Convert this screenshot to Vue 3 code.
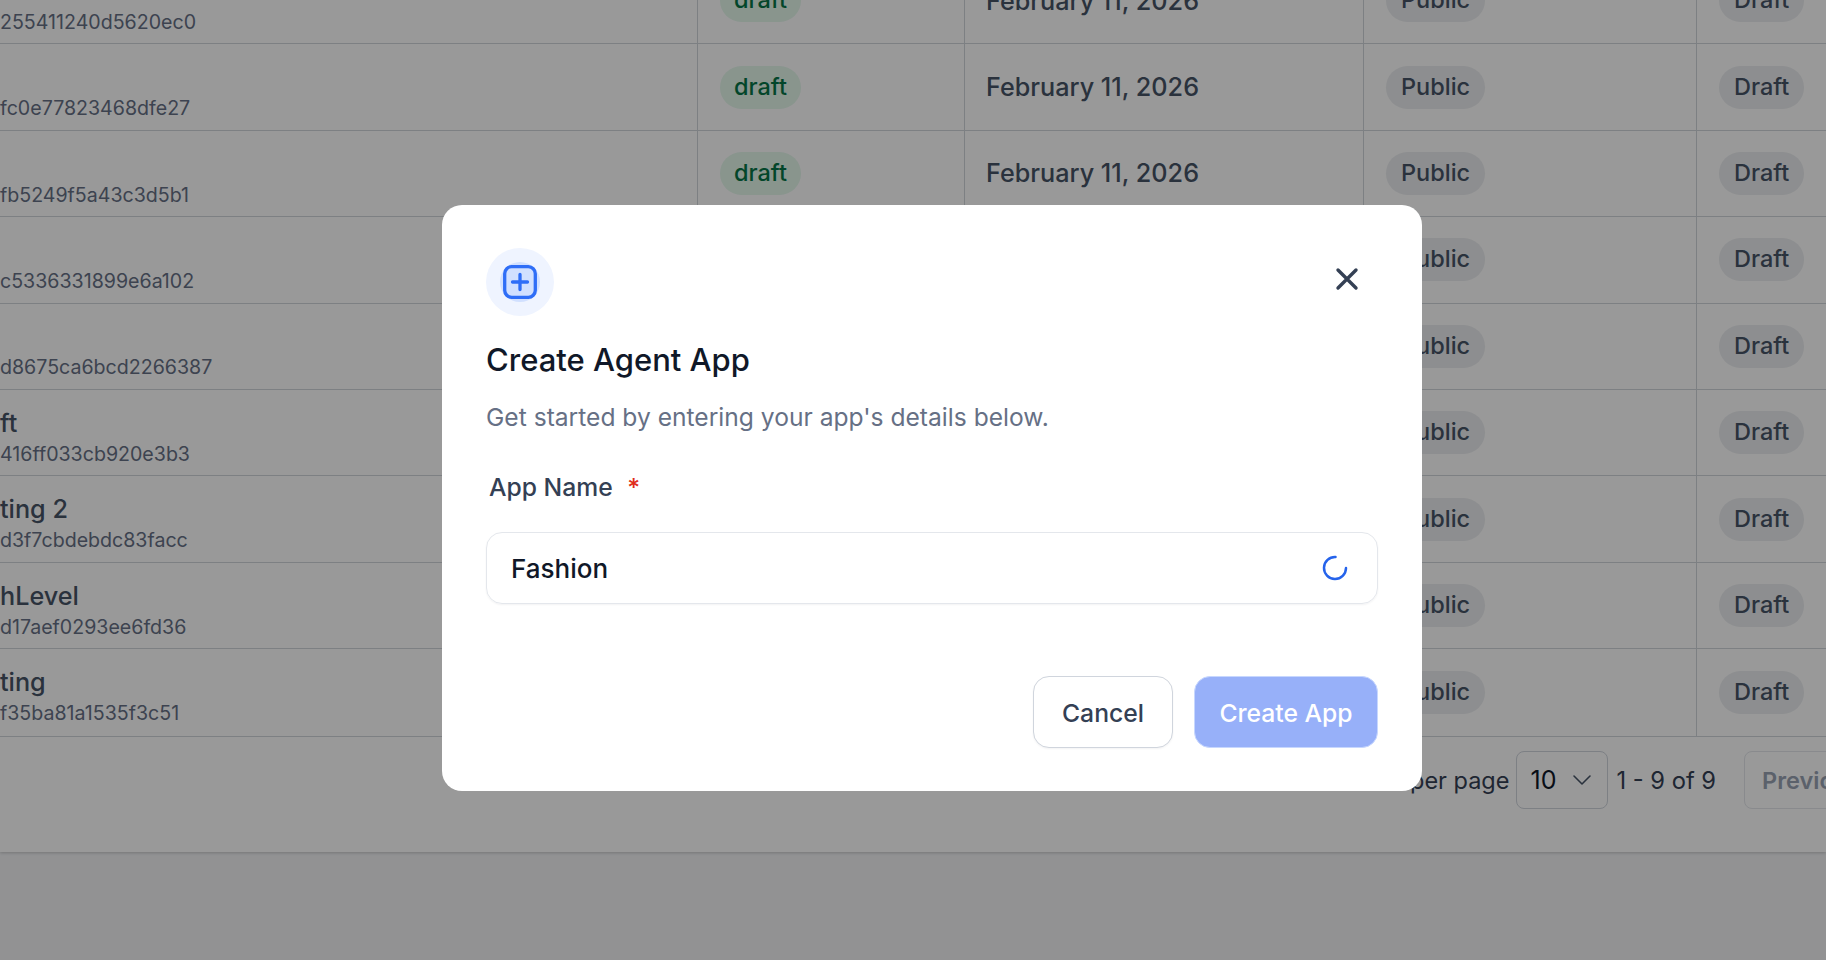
<script setup>
const rows = [
  { id: "255411240d5620ec0" },
  { id: "fc0e77823468dfe27" },
  { id: "fb5249f5a43c3d5b1" },
  { id: "c5336331899e6a102" },
  { id: "d8675ca6bcd2266387" },
  { name: "ft", id: "416ff033cb920e3b3" },
  { name: "ting 2", id: "d3f7cbdebdc83facc" },
  { name: "hLevel", id: "d17aef0293ee6fd36" },
  { name: "ting", id: "f35ba81a1535f3c51" },
];
</script>

<template>
  <div class="page">
    <div class="panel">
      <div class="table">
        <div v-for="row in rows" :key="row.id" class="row">
          <div class="cell cell-name">
            <span v-if="row.name" class="app-name">{{ row.name }}</span>
            <span class="app-id">{{ row.id }}</span>
          </div>
          <div class="cell"><span class="badge badge-green">draft</span></div>
          <div class="cell date">February 11, 2026</div>
          <div class="cell"><span class="badge">Public</span></div>
          <div class="cell"><span class="badge">Draft</span></div>
        </div>
      </div>
      <div class="pager">
        <span class="pager-text">per page</span>
        <div class="select">
          <span>10</span>
          <svg width="20" height="12" viewBox="0 0 20 12" fill="none">
            <path d="M2 2l8 8 8-8" stroke="#475467" stroke-width="1.6" stroke-linecap="round" stroke-linejoin="round" />
          </svg>
        </div>
        <span class="pager-text range">1 - 9 of 9</span>
        <button type="button" class="prev">Previous</button>
      </div>
    </div>

    <div class="overlay">
      <div class="modal">
        <button type="button" class="close" aria-label="Close">
          <svg width="24" height="24" viewBox="0 0 24 24" fill="none">
            <path d="M3 3l18 18M21 3L3 21" stroke="#344054" stroke-width="3.4" stroke-linecap="round" />
          </svg>
        </button>
        <div class="icon-ring">
          <div class="icon-inner">
            <svg width="34" height="34" viewBox="0 0 34 34" fill="none">
              <rect x="1.7" y="1.7" width="30.6" height="30.6" rx="7" stroke="#2f6ef7" stroke-width="3.3" />
              <path d="M17 9.5v15M9.5 17h15" stroke="#2f6ef7" stroke-width="3.3" stroke-linecap="round" />
            </svg>
          </div>
        </div>
        <h2 class="title">Create Agent App</h2>
        <p class="desc">Get started by entering your app's details below.</p>
        <label class="label">App Name <span class="required">*</span></label>
        <div class="input">
          <span class="input-value">Fashion</span>
          <svg width="26" height="26" viewBox="0 0 26 26" fill="none">
            <path d="M13.5 2a11 11 0 1 0 10.5 11" stroke="#2563eb" stroke-width="2.5" stroke-linecap="round" />
          </svg>
        </div>
        <div class="actions">
          <button type="button" class="btn btn-cancel">Cancel</button>
          <button type="button" class="btn btn-create">Create App</button>
        </div>
      </div>
    </div>
  </div>
</template>

<style>
html,
body {
  margin: 0;
  overflow: hidden;
}
</style>

<style scoped>
.page {
  position: relative;
  width: 1826px;
  height: 960px;
  overflow: hidden;
  background: #f3f4f6;
  font-family: Inter, "Liberation Sans", sans-serif;
}

.panel {
  width: 1826px;
  height: 894px;
  margin-top: -42px;
  background: #fff;
  box-shadow: 0 1px 3px rgba(0, 0, 0, 0.2);
}

.row {
  display: grid;
  grid-template-columns: 698px 267px 399px 333px 200px;
  height: 86.4px;
  box-sizing: border-box;
  border-bottom: 1px solid #d1d5db;
}

.row:last-child {
  height: 88px;
}

.row:last-child .cell-name {
  padding-bottom: 9.5px;
}

.cell {
  display: flex;
  align-items: center;
  padding-left: 22px;
  border-right: 1px solid #d1d5db;
  box-sizing: border-box;
}

.cell-name {
  flex-direction: column;
  align-items: flex-start;
  justify-content: flex-end;
  padding: 0 0 7.5px;
}

.app-name {
  font-size: 25.2px;
  line-height: 34px;
  font-weight: 500;
  color: #475467;
}

.app-id {
  font-size: 19.6px;
  line-height: 28px;
  color: #667085;
}

.badge {
  display: inline-flex;
  align-items: center;
  box-sizing: border-box;
  height: 43px;
  padding: 0 15px 2px;
  border-radius: 22px;
  background: #ebedf0;
  color: #475467;
  font-size: 23.5px;
  font-weight: 500;
}

.badge-green {
  padding: 0 14px 2px;
  background: #e4f8ec;
  color: #067647;
}

.date {
  padding-left: 21px;
  font-size: 25.2px;
  font-weight: 500;
  color: #475467;
}

.pager {
  display: flex;
  align-items: flex-start;
  height: 115px;
  padding: 14px 0 0 1410px;
  box-sizing: border-box;
  white-space: nowrap;
}

.pager-text {
  flex: none;
  font-size: 23.5px;
  line-height: 60px;
  color: #344054;
}

.select {
  flex: none;
  display: flex;
  align-items: center;
  justify-content: space-between;
  box-sizing: border-box;
  width: 92px;
  height: 58px;
  margin-left: 7px;
  padding: 0 15px 0 13px;
  border: 1px solid #d0d5dd;
  border-radius: 8px;
  font-size: 25px;
  color: #101828;
}

.range {
  margin-left: 8px;
  font-size: 23.7px;
}

.prev {
  flex: none;
  height: 58px;
  margin-left: 28px;
  padding: 0 17px;
  border: 1px solid #e4e7ec;
  border-radius: 8px;
  background: #fff;
  color: #98a2b3;
  font: 600 23.5px Inter, sans-serif;
}

.overlay {
  position: absolute;
  inset: 0;
  background: rgba(0, 0, 0, 0.4);
}

.modal {
  position: absolute;
  left: 442px;
  top: 205px;
  width: 980px;
  height: 586px;
  box-sizing: border-box;
  padding: 43px 44px;
  border-radius: 20px;
  background: #fff;
}

.close {
  position: absolute;
  top: 62px;
  right: 63px;
  padding: 0;
  border: 0;
  background: none;
  display: flex;
}

.icon-ring {
  display: flex;
  align-items: center;
  justify-content: center;
  width: 68px;
  height: 68px;
  border-radius: 50%;
  background: #eff4ff;
}

.icon-inner {
  display: flex;
  align-items: center;
  justify-content: center;
  width: 40px;
  height: 40px;
  border-radius: 50%;
  background: #d1e0ff;
}

.title {
  margin: 26px 0 0;
  font-size: 31px;
  line-height: 36px;
  font-weight: 500;
  color: #101828;
}

.desc {
  margin: 23px 0 0;
  font-size: 24.6px;
  line-height: 32px;
  color: #667085;
}

.label {
  display: block;
  margin-top: 38px;
  padding-left: 3px;
  font-size: 24.7px;
  line-height: 32px;
  font-weight: 500;
  color: #344054;
}

.required {
  margin-left: 8px;
  color: #e02d1c;
}

.input {
  display: flex;
  align-items: center;
  justify-content: space-between;
  box-sizing: border-box;
  height: 72px;
  margin-top: 29px;
  padding: 0 29px 0 24px;
  border: 1px solid #e4e7ec;
  border-radius: 16px;
  box-shadow: 0 1px 2px rgba(16, 24, 40, 0.05);
}

.input-value {
  padding-top: 1px;
  font-size: 26px;
  font-weight: 500;
  color: #101828;
}

.actions {
  display: flex;
  justify-content: flex-end;
  gap: 21px;
  margin-top: 72px;
}

.btn {
  height: 72px;
  box-sizing: border-box;
  padding-top: 2px;
  border-radius: 16px;
  font: 500 24.7px Inter, sans-serif;
}

.btn-cancel {
  width: 140px;
  border: 1px solid #d0d5dd;
  background: #fff;
  color: #344054;
  box-shadow: 0 1px 2px rgba(16, 24, 40, 0.05);
}

.btn-create {
  width: 184px;
  border: 1px solid #c7d7fe;
  background: #97b0f9;
  color: #fff;
}
</style>
